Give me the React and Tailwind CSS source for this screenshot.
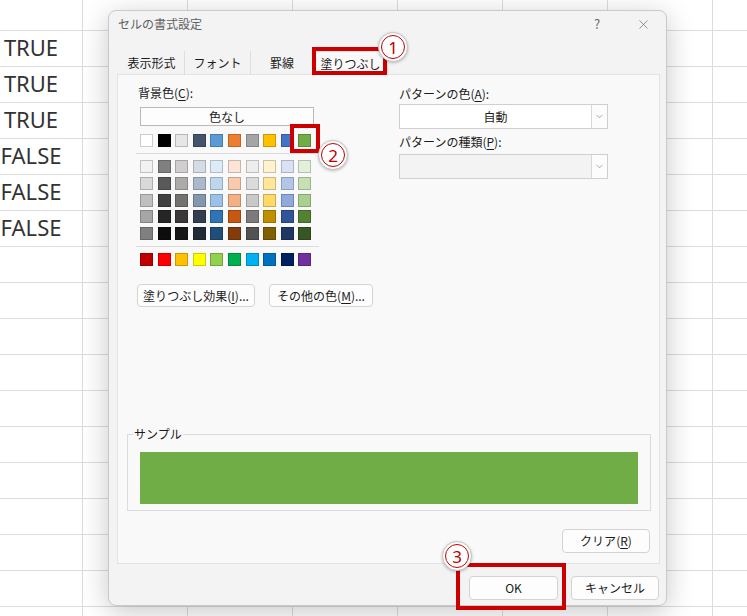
import { ChevronDown, X } from "lucide-react";

const jp = "font-['Noto_Sans_CJK_JP','Noto_Sans',sans-serif]";

const themeRow = [
    "bg-[#ffffff]", "bg-[#000000]", "bg-[#e7e6e6]", "bg-[#44546a]", "bg-[#5b9bd5]",
    "bg-[#ed7d31]", "bg-[#a5a5a5]", "bg-[#ffc000]", "bg-[#4472c4]", "bg-[#70ad47]",
];

const tintRows = [
    ["bg-[#f2f2f2]", "bg-[#808080]", "bg-[#d0cece]", "bg-[#d6dce4]", "bg-[#ddebf7]", "bg-[#fce4d6]", "bg-[#ededed]", "bg-[#fff2cc]", "bg-[#d9e1f2]", "bg-[#e2efda]"],
    ["bg-[#d9d9d9]", "bg-[#595959]", "bg-[#aeaaaa]", "bg-[#acb9ca]", "bg-[#bdd7ee]", "bg-[#f8cbad]", "bg-[#dbdbdb]", "bg-[#ffe699]", "bg-[#b4c6e7]", "bg-[#c6e0b4]"],
    ["bg-[#bfbfbf]", "bg-[#404040]", "bg-[#757171]", "bg-[#8497b0]", "bg-[#9bc2e6]", "bg-[#f4b084]", "bg-[#c9c9c9]", "bg-[#ffd966]", "bg-[#8ea9db]", "bg-[#a9d08e]"],
    ["bg-[#a6a6a6]", "bg-[#262626]", "bg-[#3a3838]", "bg-[#333f4f]", "bg-[#2f75b5]", "bg-[#c65911]", "bg-[#7b7b7b]", "bg-[#bf8f00]", "bg-[#305496]", "bg-[#548235]"],
    ["bg-[#808080]", "bg-[#0d0d0d]", "bg-[#161616]", "bg-[#222b35]", "bg-[#1f4e78]", "bg-[#833c0c]", "bg-[#525252]", "bg-[#806000]", "bg-[#203764]", "bg-[#375623]"],
];

const standardRow = [
    "bg-[#c00000]", "bg-[#ff0000]", "bg-[#ffc000]", "bg-[#ffff00]", "bg-[#92d050]",
    "bg-[#00b050]", "bg-[#00b0f0]", "bg-[#0070c0]", "bg-[#002060]", "bg-[#7030a0]",
];

const cellText = ["", "TRUE", "TRUE", "TRUE", "FALSE", "FALSE", "FALSE"];

let SwatchRow = ({ colors }) => (
    <div className="flex gap-[4.6px]">
        {colors.map((c, i) => (
            <div key={i} className={`w-[13px] h-[13px] border border-black/20 ${c}`} />
        ))}
    </div>
);

let Key = ({ k }) => (
    <>
        (<span className="underline underline-offset-2">{k}</span>)
    </>
);

let Button = ({ className, children }) => (
    <div className={`h-[23px] flex items-center justify-center rounded-[4px] bg-[#fdfdfd] border border-[#d3d3d3] text-[12px] text-[#1b1b1b] ${className}`}>
        {children}
    </div>
);

let Badge = ({ n, className }) => (
    <div className={`absolute w-[30px] h-[30px] rounded-full bg-white border border-[#c4c4c4] shadow-[0_1px_3px_rgba(0,0,0,0.25)] flex items-center justify-center ${className}`}>
        <div className="w-[24px] h-[24px] rounded-full border-[1.5px] border-[#c00000] text-[#c00000] flex items-center justify-center text-[17px] leading-none font-['Noto_Sans',sans-serif]">
            {n}
        </div>
    </div>
);

let Combo = ({ value, disabled }) => (
    <div className={`flex h-[25px] w-[209px] border border-[#cfcfcf] ${disabled ? "bg-[#f3f3f3]" : "bg-white"}`}>
        <div className="flex-1 flex items-center justify-center text-[12px] text-[#1b1b1b]">{value}</div>
        <div className="w-[16px] border-l border-[#d8d8d8] bg-[#fcfcfc] flex items-center justify-center">
            <ChevronDown size={11} strokeWidth={1.3} className="text-[#777]" />
        </div>
    </div>
);

let App = () => {
    return (
        <div className={`relative w-[747px] h-[616px] overflow-hidden bg-white ${jp}`}>

            {/* Spreadsheet behind */}
            <div className="flex flex-col">
                {Array.from({ length: 18 }).map((_, r) => (
                    <div key={r} className={`flex border-b border-[#dcdcdc] ${r === 0 ? "h-[31px]" : "h-[36px]"}`}>
                        <div className="w-[83px] shrink-0 border-r border-[#dcdcdc] flex items-center pb-[4px]">
                            <div className="w-[62px] text-center text-[22px] text-[#333] font-['Noto_Sans',sans-serif] leading-none">
                                {cellText[r] || ""}
                            </div>
                        </div>
                        {Array.from({ length: 7 }).map((_, c) => (
                            <div key={c} className="w-[105px] shrink-0 border-r border-[#dcdcdc]" />
                        ))}
                    </div>
                ))}
            </div>

            {/* Dialog */}
            <div className="absolute left-[108px] top-[10px] w-[559px] h-[596px] rounded-[8px] bg-[#f3f3f3] border border-[#c9c9c9] shadow-[0_6px_28px_rgba(0,0,0,0.22)] flex flex-col">

                {/* Title */}
                <div className="h-[26px] flex items-center pl-[9px] pr-[13px]">
                    <span className="text-[12px] text-[#606060]">セルの書式設定</span>
                    <div className="ml-auto flex items-center gap-[26px] text-[#666]">
                        <span className="w-[20px] text-center text-[13px]">?</span>
                        <span className="w-[20px] flex justify-center">
                            <X size={15} strokeWidth={1.1} />
                        </span>
                    </div>
                </div>

                {/* Tabs */}
                <div className="mt-[14px] h-[24px] flex pl-[10px] text-[12px] text-[#1b1b1b] relative">
                    <div className="w-[66px] flex items-center justify-center border-r border-[#dedede]">表示形式</div>
                    <div className="w-[66px] flex items-center justify-center border-r border-[#dedede]">フォント</div>
                    <div className="w-[62px] flex items-center justify-center">罫線</div>
                    <div className="w-[75px] h-[25px] flex items-center justify-center bg-[#f9f9f9] border border-b-0 border-[#e0e0e0]">塗りつぶし</div>
                </div>

                {/* Panel */}
                <div className="-mt-px mx-[8px] w-[543px] h-[490px] border border-[#e3e3e3] bg-[#f9f9f9] flex flex-col text-[12px] text-[#1b1b1b]">

                    <div className="flex pt-[10px] pl-[20px]">

                        {/* Left column */}
                        <div className="w-[261px] flex flex-col">
                            <div className="h-[16px] leading-[16px]">背景色<Key k="C" />:</div>
                            <div className="mt-[6px] ml-[2px] w-[174px] h-[19px] border border-[#b9b9b9] bg-[#fdfdfd] flex items-center justify-center">色なし</div>
                            <div className="mt-[8px] ml-[2px]">
                                <SwatchRow colors={themeRow} />
                            </div>
                            <div className="mt-[6px] -ml-[2px] w-[183px] h-px bg-[#dcdcdc]" />
                            <div className="mt-[6px] ml-[2px] flex flex-col gap-[3.75px]">
                                {tintRows.map((row, i) => (
                                    <SwatchRow key={i} colors={row} />
                                ))}
                            </div>
                            <div className="mt-[6px] -ml-[2px] w-[183px] h-px bg-[#dcdcdc]" />
                            <div className="mt-[6px] ml-[2px]">
                                <SwatchRow colors={standardRow} />
                            </div>
                            <div className="mt-[18px] -ml-[1px] flex gap-[14px]">
                                <Button className="w-[118px]">塗りつぶし効果<Key k="I" />...</Button>
                                <Button className="w-[104px]">その他の色<Key k="M" />...</Button>
                            </div>
                        </div>

                        {/* Right column */}
                        <div className="flex flex-col">
                            <div className="h-[16px] leading-[16px] mt-[1px]">パターンの色<Key k="A" />:</div>
                            <div className="mt-[2px]">
                                <Combo value="自動" />
                            </div>
                            <div className="mt-[5px] h-[16px] leading-[16px]">パターンの種類<Key k="P" />:</div>
                            <div className="mt-[4px]">
                                <Combo value="" disabled />
                            </div>
                        </div>
                    </div>

                    {/* Sample */}
                    <div className="mt-[127px] ml-[9px] w-[524px] h-[77px] border border-[#dcdcdc] relative pt-[17px] px-[12px]">
                        <span className="absolute -top-[9px] left-[5px] px-[1px] bg-[#f9f9f9] leading-[16px]">サンプル</span>
                        <div className="h-[52px] bg-[#70ad47]" />
                    </div>

                    <div className="mt-[18px] flex justify-end pr-[9px]">
                        <Button className="w-[88px] h-[24px]">クリア<Key k="R" /></Button>
                    </div>
                </div>

                {/* Footer */}
                <div className="mt-[12px] flex justify-end gap-[13px] pr-[7px]">
                    <Button className="w-[89px] h-[24px] border-[#7ea9d8]">OK</Button>
                    <Button className="w-[88px] h-[24px]">キャンセル</Button>
                </div>
            </div>

            {/* Annotations */}
            <div className="absolute left-[312px] top-[47px] w-[75px] h-[28px] border-4 border-[#cc0000] z-20" />
            <div className="absolute left-[290px] top-[124px] w-[30px] h-[29px] border-4 border-[#cc0000] z-20" />
            <div className="absolute left-[456px] top-[563px] w-[110px] h-[47px] border-4 border-[#cc0000] z-20" />
            <Badge n="1" className="left-[378px] top-[32px] z-30" />
            <Badge n="2" className="left-[318px] top-[140px] z-30" />
            <Badge n="3" className="left-[442px] top-[541px] z-30" />
        </div>
    );
};

export default App;
